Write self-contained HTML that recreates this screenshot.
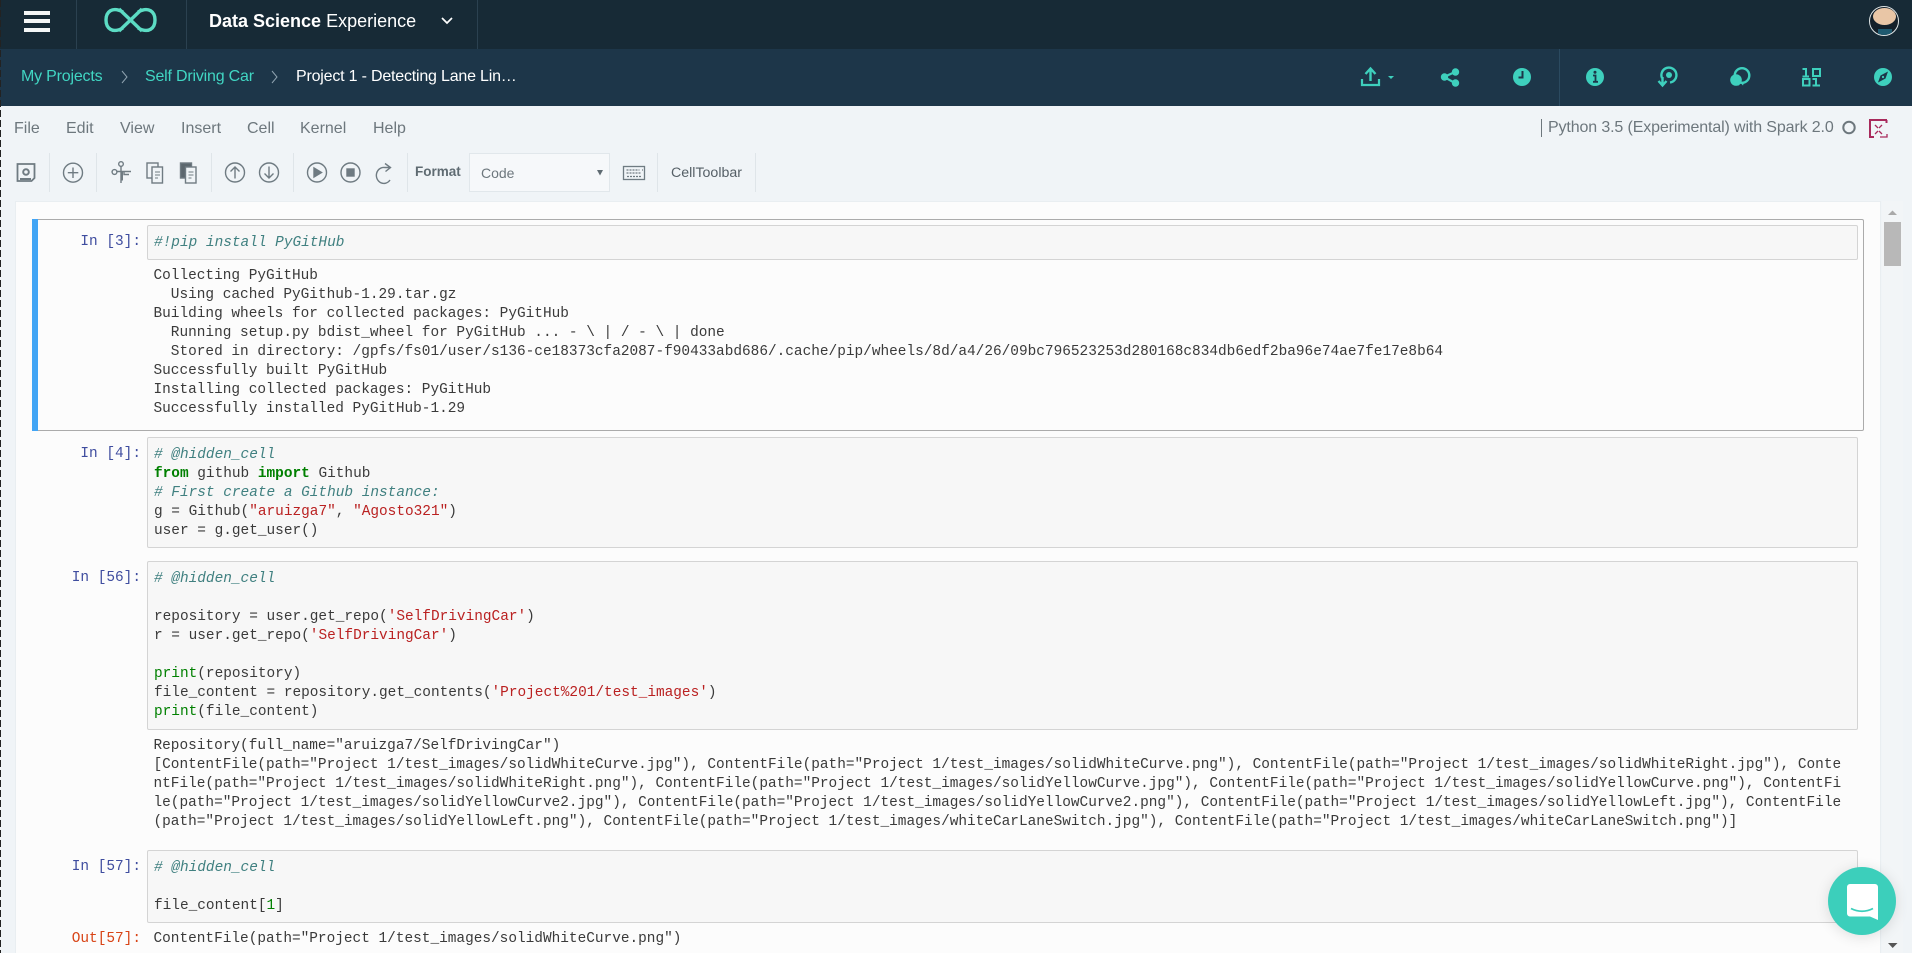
<!DOCTYPE html>
<html><head><meta charset="utf-8"><title>Data Science Experience</title>
<style>
html,body{margin:0;padding:0;width:1912px;height:953px;overflow:hidden;background:#f0f4f7;font-family:"Liberation Sans",sans-serif}
.a{position:absolute}
.t{position:absolute;white-space:pre;line-height:20px}
.m{position:absolute;font-family:"Liberation Mono",monospace;font-size:14.43px;line-height:19px;white-space:pre;color:#3a3a3a}
.p{position:absolute;font-family:"Liberation Mono",monospace;font-size:14.43px;line-height:19px;white-space:pre;color:#3f4d9f;text-align:right;right:1771px}
.i{position:absolute;background:#f7f7f7;border:1px solid #d4d4d4;border-radius:2px;box-sizing:border-box;left:147px;width:1711px}
.sep{position:absolute;top:153px;width:1px;height:39px;background:#dfe5e9}
.c{color:#408080;font-style:italic}.k{color:#008000;font-weight:bold}.s{color:#ba2121}.b{color:#008000}
.menu{position:absolute;top:119px;font-size:16px;line-height:20px;color:#6d777d}
svg{position:absolute;overflow:visible}
</style></head><body>
<div class="a" style="left:0;top:0;width:1912px;height:49px;background:#172a36"></div>
<div class="a" style="left:0;top:49px;width:1912px;height:57px;background:#1d3649"></div>
<div class="a" style="left:76px;top:0;width:1px;height:49px;background:#2b4150"></div>
<div class="a" style="left:186px;top:0;width:1px;height:49px;background:#2b4150"></div>
<div class="a" style="left:477px;top:0;width:1px;height:49px;background:#2b4150"></div>
<div class="a" style="left:24px;top:11px;width:26px;height:4px;background:#f4f6f6"></div>
<div class="a" style="left:24px;top:19px;width:26px;height:4px;background:#f4f6f6"></div>
<div class="a" style="left:24px;top:28px;width:26px;height:4px;background:#f4f6f6"></div>
<svg style="left:0;top:0" width="1912" height="200" fill="none">
<path d="M123 12C112 6 106 12 106 20C106 28 112 34 123 28M138 12C149 6 155 12 155 20C155 28 149 34 138 28M119 9L142 31M142 9L119 31" stroke="#5cdcc4" stroke-width="3.400"/>
<path d="M442 18l5 5 5-5" stroke="#fff" stroke-width="1.700"/>
<path d="M122 71l5 6-5 6M272 71l5 6-5 6" stroke="#8fa3b0" stroke-width="1"/>
<!-- upload -->
<path d="M1362 79v6h17v-6" stroke="#3ed0bd" stroke-width="2.200"/><path d="M1370.500 81V69M1365.500 74l5-5.500 5 5.500" stroke="#3ed0bd" stroke-width="2.400"/>
<path d="M1388 76h6l-3 3z" fill="#3ed0bd"/>
<!-- share -->
<path d="M1455 72l-11 5 11 6" stroke="#3ed0bd" stroke-width="2.200"/><circle cx="1455.500" cy="72" r="3.700" fill="#3ed0bd"/><circle cx="1444.500" cy="77" r="3.700" fill="#3ed0bd"/><circle cx="1455.500" cy="83" r="3.700" fill="#3ed0bd"/>
<!-- clock -->
<circle cx="1522" cy="77" r="9" fill="#3ed0bd"/><path d="M1522.500 71v6.500h-4" stroke="#1d3649" stroke-width="2"/>
<!-- info -->
<circle cx="1595" cy="77" r="9" fill="#3ed0bd"/><circle cx="1595" cy="72.300" r="1.500" fill="#1d3649"/><path d="M1593 75.500h2.500v6M1593 81.800h5" stroke="#1d3649" stroke-width="1.800"/>
<!-- find -->
<path d="M1662 78A7.500 7.500 0 1 1 1670 82.500" stroke="#3ed0bd" stroke-width="2.400"/><circle cx="1669" cy="75" r="3" fill="#3ed0bd"/><path d="M1662.500 77v7M1658.500 81l4 4.500 4-4.500" stroke="#3ed0bd" stroke-width="2.400"/>
<!-- compare -->
<circle cx="1742" cy="75.500" r="7.300" stroke="#3ed0bd" stroke-width="2.400"/><circle cx="1736" cy="80" r="5.800" fill="#3ed0bd"/><path d="M1734 84l5 1.500 1-3zM1741 83.500l2 2 1-3z" fill="#3ed0bd"/>
<!-- binary -->
<path d="M1802.500 69h3.500v7.500M1802.500 76.500h6.500" stroke="#3ed0bd" stroke-width="2"/><rect x="1813" y="69" width="7" height="7" stroke="#3ed0bd" stroke-width="2"/><rect x="1803" y="79" width="6.500" height="6.500" stroke="#3ed0bd" stroke-width="2"/><path d="M1812.500 79h3.500v6.500M1812.500 85.500h7.500" stroke="#3ed0bd" stroke-width="2"/>
<!-- compass -->
<circle cx="1883" cy="77" r="9" fill="#3ed0bd"/><path d="M1888 71.500l-7.500 4-2.500 7 7.500-4z" fill="#1d3649"/><circle cx="1883" cy="77" r="1.100" fill="#3ed0bd"/>
<!-- kernel -->
<path d="M1541.500 119v18" stroke="#6d777d"/>
<circle cx="1849" cy="127.500" r="5.700" stroke="#6d777d" stroke-width="2"/>
<path d="M1887 120h-17v17h4M1886.500 120v3" stroke="#a82a5c" stroke-width="2"/>
<path d="M1875 125l3 3M1882 125l-3 3M1875 134l3-3M1882 134l-3-3M1880 137h7v-3" stroke="#a82a5c" stroke-width="1.300"/>
<!-- toolbar -->
<g stroke="#6f7b82" stroke-width="1.400">
<path d="M17.500 164h17v14l-3 3h-14z" stroke-width="1.800"/><circle cx="26" cy="172" r="2.800" stroke-width="2"/><path d="M20 179h11" stroke-width="2"/>
<circle cx="73" cy="172.700" r="9.500"/><path d="M73 167.500v10.500M67.800 172.700h10.500"/>
<circle cx="114.500" cy="172" r="2.400"/><circle cx="121" cy="164" r="2.300"/><path d="M117 171.500h14M121 166.500V183M124 172l0 2.500 5 0" /><path d="M122 171.500v9" stroke-width="2"/>
<rect x="147" y="163" width="11" height="15"/><rect x="152" y="167" width="10.500" height="16" fill="#f0f4f7"/><path d="M155 172h5M155 175h5M155 178h3" stroke-width="1"/>
<rect x="180.500" y="163" width="11" height="15" fill="#5c676e"/><rect x="185.500" y="167" width="10.500" height="16" fill="#f0f4f7"/><path d="M188.500 172h5M188.500 175h5M188.500 178h3" stroke-width="1"/>
<circle cx="235" cy="172.500" r="9.500"/><path d="M235 178.500v-11.500M230.500 171.500l4.500-4.500 4.500 4.500"/>
<circle cx="269" cy="172.500" r="9.500"/><path d="M269 166.500v11.500M264.500 173.500l4.500 4.500 4.500-4.500"/>
<circle cx="317" cy="172.500" r="9.500"/><path d="M314 168l7.500 4.500-7.500 4.500z" fill="#6f7b82"/>
<circle cx="350.500" cy="172.500" r="9.500"/><rect x="347" y="169" width="7" height="7" fill="#6f7b82"/>
<path d="M390 167.500H385A7.500 8 0 1 0 390 180M385 163.500l5.500 4-5 4" fill="none"/>
</g>
<g stroke="#6f7b82" stroke-width="1.300"><rect x="623.500" y="166.500" width="21" height="13"/><path d="M626.500 170h13M642 170h1M626.500 173h15M627 176.500h14" stroke-dasharray="2 1"/></g>
</svg>
<div class="t" style="left:209px;top:11px;font-size:18px;color:#fff"><b>Data Science</b> Experience</div>
<div class="t" style="left:21px;top:67px;font-size:16px;letter-spacing:-.2px;color:#41d6c3">My Projects</div>
<div class="t" style="left:145px;top:67px;font-size:16px;letter-spacing:-.2px;color:#41d6c3">Self Driving Car</div>
<div class="t" style="left:296px;top:67px;font-size:16px;letter-spacing:-.2px;color:#fff">Project 1 - Detecting Lane Lin…</div>
<div class="a" style="left:1559px;top:49px;width:1px;height:57px;background:#2b4a60"></div>
<div class="a" style="left:1869px;top:6px;width:30px;height:30px;border-radius:50%;background:#14202a;overflow:hidden;border:1px solid #dfe5e6;box-sizing:border-box">
<div class="a" style="left:3px;top:1px;width:23px;height:17px;border-radius:50%;background:#e9c6a6"></div>
<div class="a" style="left:8px;top:22px;width:14px;height:6px;background:#1f5a70"></div></div>

<div class="menu" style="left:14px">File</div><div class="menu" style="left:66px">Edit</div><div class="menu" style="left:120px">View</div><div class="menu" style="left:181px">Insert</div><div class="menu" style="left:247px">Cell</div><div class="menu" style="left:300px">Kernel</div><div class="menu" style="left:373px">Help</div>
<div class="t" style="left:1548px;top:118px;font-size:16px;letter-spacing:-.13px;color:#6d777d">Python 3.5 (Experimental) with Spark 2.0</div>

<div class="sep" style="left:49px"></div><div class="sep" style="left:96px"></div><div class="sep" style="left:211px"></div><div class="sep" style="left:293px"></div><div class="sep" style="left:407px"></div><div class="sep" style="left:657px"></div><div class="sep" style="left:755px"></div>
<div class="t" style="left:415px;top:162px;font-size:13.500px;font-weight:bold;color:#5f6b72">Format</div>
<div class="a" style="left:469px;top:153px;width:141px;height:39px;background:#f6f8fa;border:1px solid #e1e7eb;box-sizing:border-box"></div>
<div class="t" style="left:481px;top:163px;font-size:14px;color:#6d777d">Code</div>
<svg style="left:0;top:0" width="10" height="10"><path d="M597 170h6l-3 5.500z" fill="#5f6b72"/></svg>
<div class="t" style="left:671px;top:163px;font-size:14.200px;color:#555f66">CellToolbar</div>

<!-- notebook -->
<div class="a" style="left:15px;top:201px;width:1866px;height:752px;background:#fcfcfc;border:1px solid #e9eef1;border-bottom:0;box-sizing:border-box"></div>
<div class="a" style="left:1882px;top:201px;width:21px;height:752px;background:#f2f5f7"></div>
<div class="a" style="left:1884px;top:222px;width:17px;height:44px;background:#b8b8b8"></div>
<svg style="left:0;top:0" width="10" height="10"><path d="M1888 215l4.500-4.500 4.500 4.500z" fill="#a9a9a9"/><path d="M1888 943h9.500l-4.800 5z" fill="#555"/></svg>

<div class="a" style="left:32px;top:219px;width:1832px;height:212px;border:1px solid #ababab;box-sizing:border-box;border-radius:2px;background:#fcfcfc"></div>
<div class="a" style="left:32px;top:219px;width:6px;height:212px;background:#42a5f5"></div>

<div class="p" style="top:233px">In [3]:</div>
<div class="i" style="top:225px;height:35px"></div>
<div class="m" style="left:154px;top:234px"><span class="c">#!pip install PyGitHub</span></div>
<div class="m" style="left:153.500px;top:267px">Collecting PyGitHub
  Using cached PyGithub-1.29.tar.gz
Building wheels for collected packages: PyGitHub
  Running setup.py bdist_wheel for PyGitHub ... - \ | / - \ | done
  Stored in directory: /gpfs/fs01/user/s136-ce18373cfa2087-f90433abd686/.cache/pip/wheels/8d/a4/26/09bc796523253d280168c834db6edf2ba96e74ae7fe17e8b64
Successfully built PyGitHub
Installing collected packages: PyGitHub
Successfully installed PyGitHub-1.29</div>

<div class="p" style="top:445px">In [4]:</div>
<div class="i" style="top:437px;height:111px"></div>
<div class="m" style="left:154px;top:446px"><span class="c"># @hidden_cell</span>
<span class="k">from</span> github <span class="k">import</span> Github
<span class="c"># First create a Github instance:</span>
g = Github(<span class="s">"aruizga7"</span>, <span class="s">"Agosto321"</span>)
user = g.get_user()</div>

<div class="p" style="top:569px">In [56]:</div>
<div class="i" style="top:561px;height:169px"></div>
<div class="m" style="left:154px;top:570px"><span class="c"># @hidden_cell</span>

repository = user.get_repo(<span class="s">'SelfDrivingCar'</span>)
r = user.get_repo(<span class="s">'SelfDrivingCar'</span>)

<span class="b">print</span>(repository)
file_content = repository.get_contents(<span class="s">'Project%201/test_images'</span>)
<span class="b">print</span>(file_content)</div>
<div class="m" style="left:153.500px;top:737px">Repository(full_name="aruizga7/SelfDrivingCar")
[ContentFile(path="Project 1/test_images/solidWhiteCurve.jpg"), ContentFile(path="Project 1/test_images/solidWhiteCurve.png"), ContentFile(path="Project 1/test_images/solidWhiteRight.jpg"), Conte
ntFile(path="Project 1/test_images/solidWhiteRight.png"), ContentFile(path="Project 1/test_images/solidYellowCurve.jpg"), ContentFile(path="Project 1/test_images/solidYellowCurve.png"), ContentFi
le(path="Project 1/test_images/solidYellowCurve2.jpg"), ContentFile(path="Project 1/test_images/solidYellowCurve2.png"), ContentFile(path="Project 1/test_images/solidYellowLeft.jpg"), ContentFile
(path="Project 1/test_images/solidYellowLeft.png"), ContentFile(path="Project 1/test_images/whiteCarLaneSwitch.jpg"), ContentFile(path="Project 1/test_images/whiteCarLaneSwitch.png")]</div>

<div class="p" style="top:858px">In [57]:</div>
<div class="i" style="top:850px;height:73px"></div>
<div class="m" style="left:154px;top:859px"><span class="c"># @hidden_cell</span>

file_content[<span class="b">1</span>]</div>
<div class="p" style="top:930px;color:#d84315">Out[57]:</div>
<div class="m" style="left:153.500px;top:930px">ContentFile(path="Project 1/test_images/solidWhiteCurve.png")</div>

<!-- chat bubble -->
<div class="a" style="left:1828px;top:867px;width:68px;height:68px;border-radius:50%;background:#3ccfbb;box-shadow:0 2px 14px rgba(0,0,0,.12)"></div>
<svg style="left:0;top:0" width="10" height="10"><path d="M1850 884h25a3 3 0 0 1 3 3v33l-8-3.500h-20a3 3 0 0 1-3-3v-26.500a3 3 0 0 1 3-3z" fill="#fff"/><path d="M1851 908.500c7 3.600 15 3.600 22 0" stroke="#3ccfbb" stroke-width="1.800" fill="none"/></svg>

<div class="a" style="left:0;top:0;width:1px;height:953px;background:repeating-linear-gradient(#222 0 7px,transparent 7px 10px)"></div>
</body></html>
